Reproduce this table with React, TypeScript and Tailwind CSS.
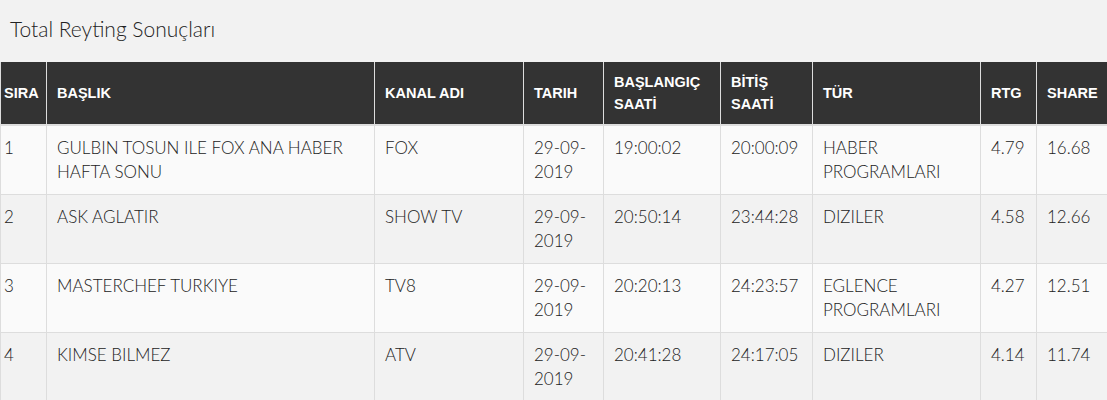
import React from 'react';

type Row = {
  sira: string;
  baslik: React.ReactNode;
  kanal: string;
  tarih: string;
  baslangic: string;
  bitis: string;
  tur: React.ReactNode;
  rtg: string;
  share: string;
};

const rows: Row[] = [
  {
    sira: '1',
    baslik: (
      <>
        GULBIN TOSUN ILE FOX ANA HABER
        <br />
        HAFTA SONU
      </>
    ),
    kanal: 'FOX',
    tarih: '29-09-2019',
    baslangic: '19:00:02',
    bitis: '20:00:09',
    tur: (
      <>
        HABER
        <br />
        PROGRAMLARI
      </>
    ),
    rtg: '4.79',
    share: '16.68',
  },
  {
    sira: '2',
    baslik: 'ASK AGLATIR',
    kanal: 'SHOW TV',
    tarih: '29-09-2019',
    baslangic: '20:50:14',
    bitis: '23:44:28',
    tur: 'DIZILER',
    rtg: '4.58',
    share: '12.66',
  },
  {
    sira: '3',
    baslik: 'MASTERCHEF TURKIYE',
    kanal: 'TV8',
    tarih: '29-09-2019',
    baslangic: '20:20:13',
    bitis: '24:23:57',
    tur: (
      <>
        EGLENCE
        <br />
        PROGRAMLARI
      </>
    ),
    rtg: '4.27',
    share: '12.51',
  },
  {
    sira: '4',
    baslik: 'KIMSE BILMEZ',
    kanal: 'ATV',
    tarih: '29-09-2019',
    baslangic: '20:41:28',
    bitis: '24:17:05',
    tur: 'DIZILER',
    rtg: '4.14',
    share: '11.74',
  },
];

const cols = ['w-[46px]', 'w-[328px]', 'w-[149px]', 'w-[80px]', 'w-[117px]', 'w-[92px]', 'w-[168px]', 'w-[56px]', 'w-[74px]'];

function Th({ children, first }: { children: React.ReactNode; first?: boolean }) {
  return (
    <th
      className={`border-x border-[#dddddd] border-b-2 align-middle py-[9px] pr-[8px] text-left font-['Liberation_Sans',Arial,sans-serif] text-[14.5px] font-bold leading-[22px] text-white ${
        first ? 'pl-[3px]' : 'pl-[10px]'
      }`}
    >
      {children}
    </th>
  );
}

function Td({ children, first }: { children: React.ReactNode; first?: boolean }) {
  return (
    <td
      className={`border-x border-b border-[#dddddd] align-top pt-[10px] pb-[10px] pr-[8px] text-[17px] font-light leading-[24px] text-[#222222] ${
        first ? 'pl-[3px]' : 'pl-[10px]'
      }`}
    >
      {children}
    </td>
  );
}

export default function App() {
  return (
    <div className="h-[400px] w-[1107px] overflow-hidden bg-[#f2f2f2] font-['Lato',sans-serif]">
      <h2 className="px-[10px] pt-[12px] pb-[16px] text-[21px] font-light leading-[34px] text-[#222222]">
        Total Reyting Sonuçları
      </h2>
      <table className="w-[1110px] table-fixed border-collapse">
        <colgroup>
          {cols.map((c, i) => (
            <col key={i} className={c} />
          ))}
        </colgroup>
        <thead className="bg-[#333333]">
          <tr>
            <Th first>SIRA</Th>
            <Th>BAŞLIK</Th>
            <Th>KANAL ADI</Th>
            <Th>TARIH</Th>
            <Th>
              BAŞLANGIÇ
              <br />
              SAATİ
            </Th>
            <Th>
              BİTİŞ
              <br />
              SAATİ
            </Th>
            <Th>TÜR</Th>
            <Th>RTG</Th>
            <Th>SHARE</Th>
          </tr>
        </thead>
        <tbody>
          {rows.map((r, i) => (
            <tr key={r.sira} className={i % 2 === 0 ? 'bg-[#fafafa]' : 'bg-[#f2f2f2]'}>
              <Td first>{r.sira}</Td>
              <Td>{r.baslik}</Td>
              <Td>{r.kanal}</Td>
              <Td>
                {r.tarih.slice(0, 6)}
                <br />
                {r.tarih.slice(6)}
              </Td>
              <Td>{r.baslangic}</Td>
              <Td>{r.bitis}</Td>
              <Td>{r.tur}</Td>
              <Td>{r.rtg}</Td>
              <Td>{r.share}</Td>
            </tr>
          ))}
        </tbody>
      </table>
    </div>
  );
}
